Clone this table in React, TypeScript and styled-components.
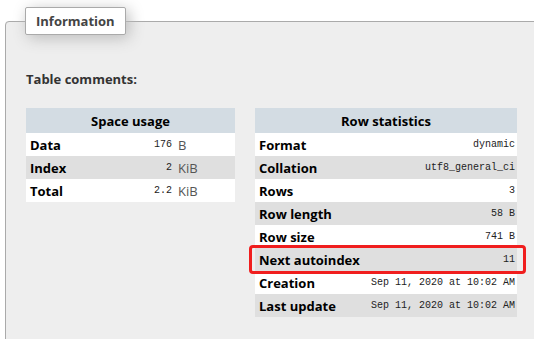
import styled, { createGlobalStyle } from 'styled-components'

const GlobalStyle = createGlobalStyle`
  html, body {
    margin: 0;
    padding: 0;
    background: #fff;
    font-family: "Open Sans", "Noto Sans", sans-serif;
    font-size: 13px;
    color: #000;
  }
`

const Page = styled.div`
  padding: 7px 0 0 5px;
  overflow: hidden;
  height: 339px;
  box-sizing: border-box;
`

const Fieldset = styled.fieldset`
  margin: 0 -20px 0 0;
  padding: 0;
  border: 1px solid #aaa;
  border-radius: 4px 4px 0 0;
  background: #eee;
  min-height: 360px;
  box-sizing: border-box;
`

const Legend = styled.legend`
  margin-left: 19px;
  padding: 0 10px;
  height: 28px;
  line-height: 26px;
  box-sizing: border-box;
  border: 1px solid #aaa;
  border-radius: 2px;
  background: #fff;
  box-shadow: 3px 3px 15px #bbb;
  font-weight: 700;
  font-size: 13px;
  color: #444;
`

const Body = styled.div`
  padding: 35px 20px 0 20px;
`

const Comments = styled.div`
  font-weight: 700;
  color: #333;
  line-height: 18px;
  margin-bottom: 20px;
`

const Tables = styled.div`
  display: flex;
  align-items: flex-start;
  gap: 20px;
`

const TableWrap = styled.div<{ $width: number }>`
  position: relative;
  width: ${(p) => p.$width}px;
`

const Table = styled.table`
  width: 100%;
  border-collapse: collapse;
`

const Head = styled.th`
  height: 25px;
  padding: 0;
  background: #d3dce3;
  font-weight: 700;
  text-align: center;
  color: #000;
`

const Row = styled.tr<{ $odd: boolean }>`
  background: ${(p) => (p.$odd ? '#dfdfdf' : '#fff')};
`

const Label = styled.th`
  height: 23px;
  padding: 0 0 0 4px;
  text-align: left;
  font-weight: 700;
  white-space: nowrap;
`

const Value = styled.td<{ $pad?: number }>`
  padding: 0 ${(p) => p.$pad ?? 2}px 0 0;
  text-align: right;
  font-family: "Liberation Mono", "DejaVu Sans Mono", monospace;
  font-size: 10px;
  color: #222;
  white-space: nowrap;
`

const Unit = styled.td`
  width: 57px;
  padding: 0;
  text-align: left;
  color: #555;
`

const Highlight = styled.div`
  position: absolute;
  left: -6px;
  top: 137px;
  width: 277px;
  height: 29px;
  box-sizing: border-box;
  border: 3px solid #f01e1e;
  border-radius: 4px;
  pointer-events: none;
`

const space = [
  { label: 'Data', value: '176', unit: 'B' },
  { label: 'Index', value: '2', unit: 'KiB' },
  { label: 'Total', value: '2.2', unit: 'KiB' },
]

const stats = [
  { label: 'Format', value: 'dynamic' },
  { label: 'Collation', value: 'utf8_general_ci' },
  { label: 'Rows', value: '3' },
  { label: 'Row length', value: '58 B' },
  { label: 'Row size', value: '741 B' },
  { label: 'Next autoindex', value: '11' },
  { label: 'Creation', value: 'Sep 11, 2020 at 10:02 AM' },
  { label: 'Last update', value: 'Sep 11, 2020 at 10:02 AM' },
]

export default function App() {
  return (
    <Page>
      <GlobalStyle />
      <Fieldset>
        <Legend>Information</Legend>
        <Body>
          <Comments>Table comments:</Comments>
          <Tables>
            <TableWrap $width={209}>
              <Table>
                <thead>
                  <tr>
                    <Head colSpan={3}>Space usage</Head>
                  </tr>
                </thead>
                <tbody>
                  {space.map((r, i) => (
                    <Row key={r.label} $odd={i % 2 === 1}>
                      <Label>{r.label}</Label>
                      <Value $pad={6}>{r.value}</Value>
                      <Unit>{r.unit}</Unit>
                    </Row>
                  ))}
                </tbody>
              </Table>
            </TableWrap>
            <TableWrap $width={262}>
              <Table>
                <thead>
                  <tr>
                    <Head colSpan={2}>Row statistics</Head>
                  </tr>
                </thead>
                <tbody>
                  {stats.map((r, i) => (
                    <Row key={r.label} $odd={i % 2 === 1}>
                      <Label>{r.label}</Label>
                      <Value>{r.value}</Value>
                    </Row>
                  ))}
                </tbody>
              </Table>
              <Highlight />
            </TableWrap>
          </Tables>
        </Body>
      </Fieldset>
    </Page>
  )
}
